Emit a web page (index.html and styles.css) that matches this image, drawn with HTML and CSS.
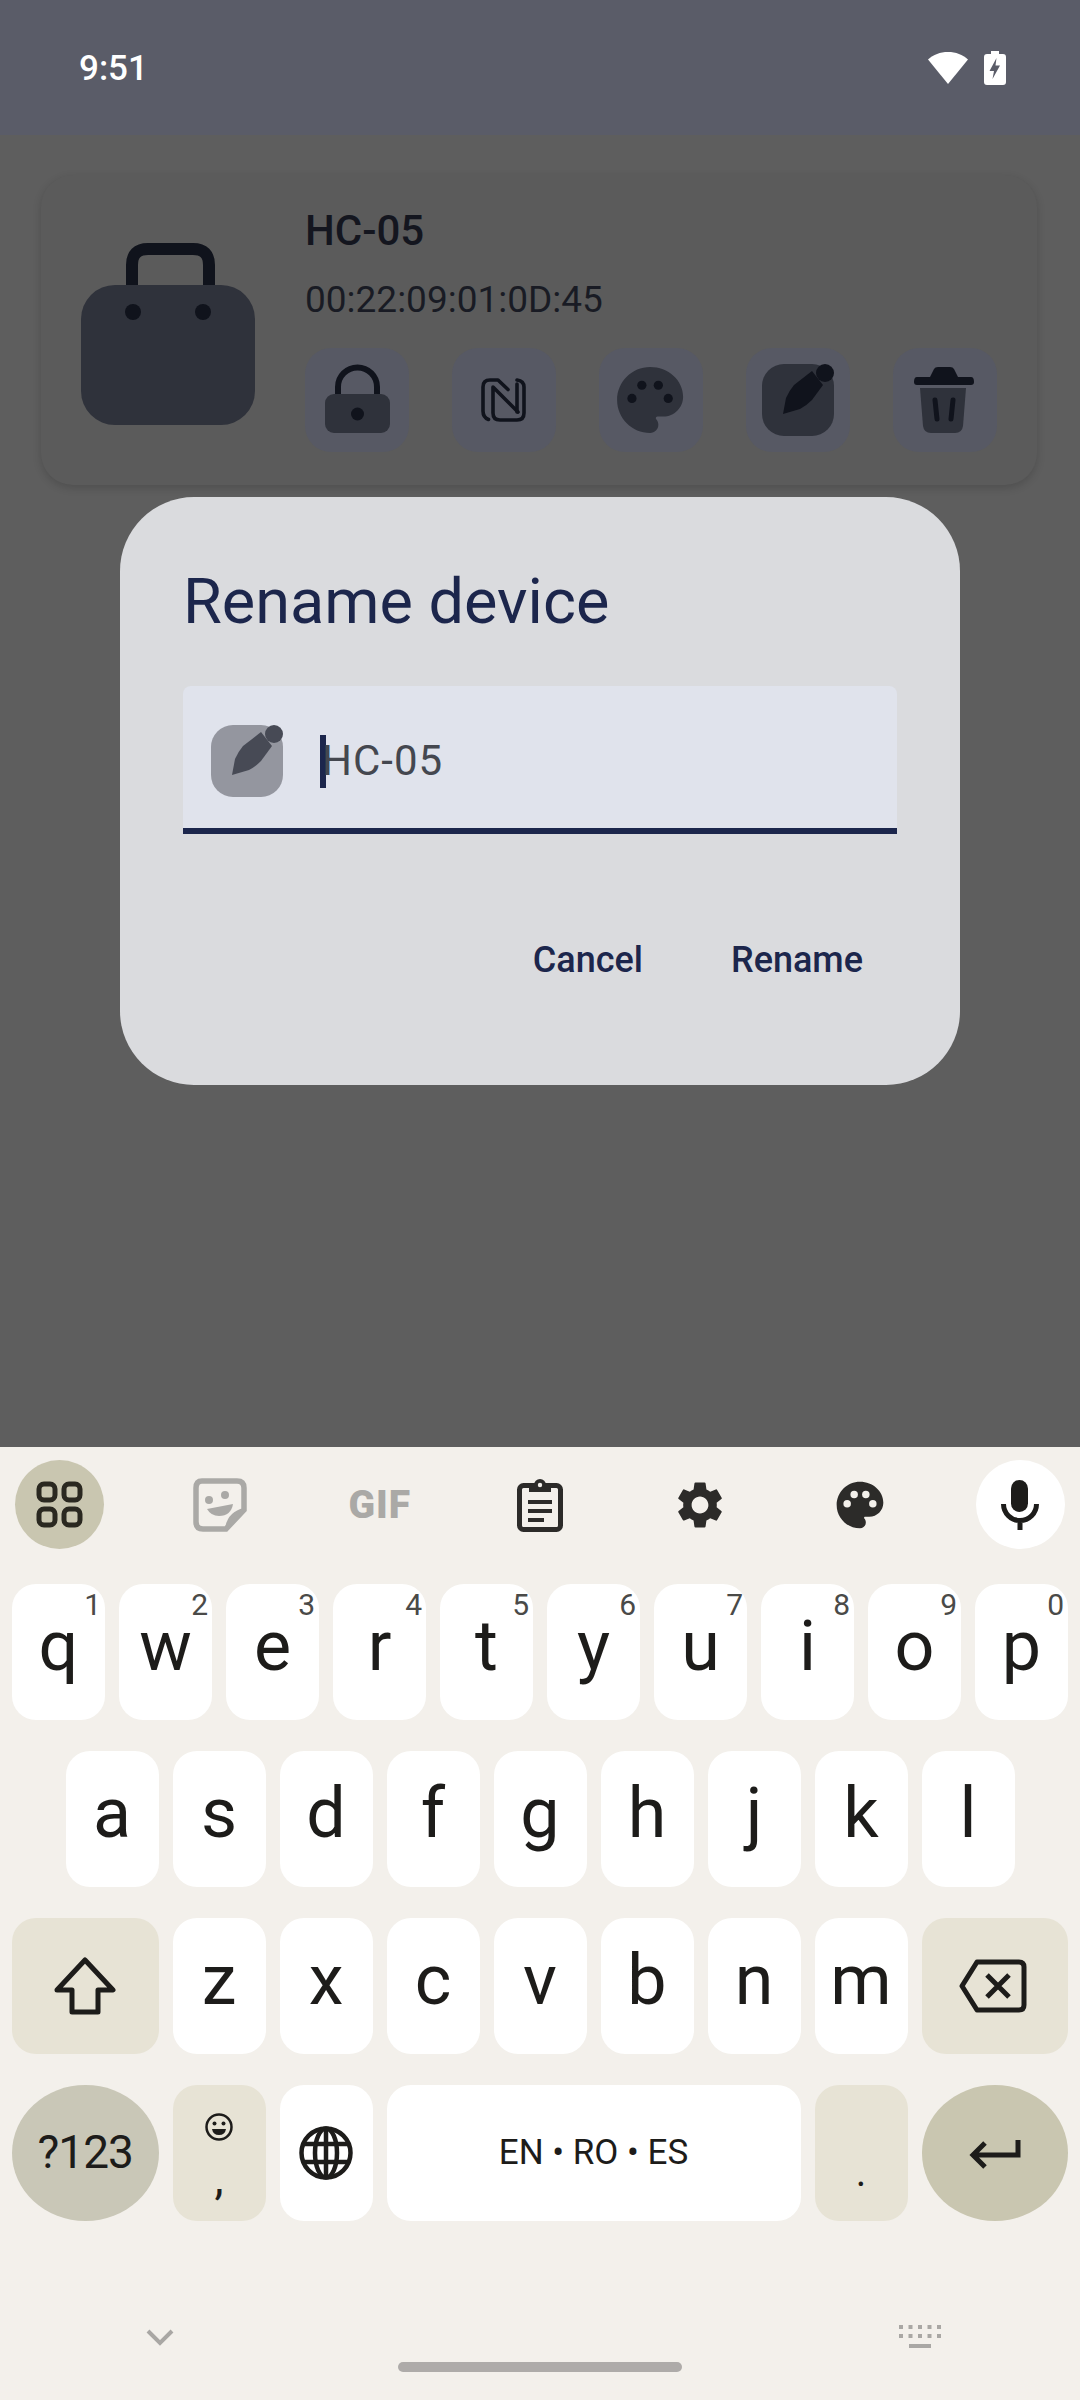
FILE: index.html
```html
<!DOCTYPE html>
<html lang="en">
<head>
<meta charset="UTF-8">
<meta name="viewport" content="width=device-width, initial-scale=1.0">
<title>Rename device</title>
<link rel="stylesheet" href="styles.css">
</head>
<body>
<div class="screen">

    <div class="status-bar">
        <span class="time">9:51</span>
        <div class="status-icons">
            <svg class="wifi" width="40" height="32" viewBox="0 0 40 32"><path fill="#fff" d="M20 0C12 0 5.500 2.500 0 7.500L20 32 40 7.500C34.500 2.500 28 0 20 0z"/></svg>
            <svg class="battery" width="22" height="34" viewBox="0 0 22 34"><path fill="#fff" d="M7 0h8v3h4a3 3 0 0 1 3 3v25a3 3 0 0 1-3 3H3a3 3 0 0 1-3-3V6a3 3 0 0 1 3-3h4z"/><path fill="#5a5c68" d="M12.500 7 5.500 20h4.500l-1.500 8 7.500-13.500h-4.500z"/></svg>
        </div>
    </div>

    <div class="app">
        <div class="card">
            <svg class="device-icon" width="174" height="182" viewBox="0 0 174 182">
                <path fill="none" stroke="#10131c" stroke-width="12" d="M51 46V22Q51 6 67 6H112Q128 6 128 22V46"/>
                <rect x="0" y="42" width="174" height="140" rx="34" fill="#2f323b"/>
                <circle cx="52" cy="69" r="8" fill="#10131c"/>
                <circle cx="122" cy="69" r="8" fill="#10131c"/>
            </svg>
            <div class="device-info">
                <div class="device-name">HC-05</div>
                <div class="device-mac">00:22:09:01:0D:45</div>
                <div class="actions">
                    <div class="tile">
                        <svg width="104" height="104" viewBox="0 0 104 104">
                            <path fill="none" stroke="#10131c" stroke-width="6" d="M33 48V39A19.500 19.500 0 0 1 72 39V48"/>
                            <rect x="20" y="46" width="65" height="39" rx="9" fill="#2f323b"/>
                            <circle cx="52.500" cy="66" r="6.500" fill="#10131c"/>
                        </svg>
                    </div>
                    <div class="tile">
                        <svg width="104" height="104" viewBox="0 0 104 104">
                            <g fill="none" stroke="#10131c" stroke-width="3.600" stroke-linecap="round" stroke-linejoin="round">
                                <path d="M36.500 71.500Q31 69.500 31 63V39Q31 32 38 32H46L56 41.500"/>
                                <path d="M65 32Q72 33 72 39V65Q72 72 65 72H48Q41 72 41 65V39L66 64"/>
                                <path d="M65 36V64"/>
                            </g>
                        </svg>
                    </div>
                    <div class="tile">
                        <svg width="104" height="104" viewBox="0 0 104 104">
                            <g transform="translate(11.500 12.500) scale(3.300)">
                                <path fill="#2f323b" d="M12 2C6.490 2 2 6.490 2 12s4.490 10 10 10c1.380 0 2.500-1.120 2.500-2.500 0-.610-.230-1.200-.640-1.670-.080-.100-.130-.210-.130-.330 0-.280.220-.500.500-.500H16c3.310 0 6-2.690 6-6 0-4.960-4.490-9-10-9z"/>
                                <circle cx="6.500" cy="11.500" r="1.400" fill="#10131c"/>
                                <circle cx="9.500" cy="7.500" r="1.400" fill="#10131c"/>
                                <circle cx="14.500" cy="7.500" r="1.400" fill="#10131c"/>
                                <circle cx="17.500" cy="11.500" r="1.400" fill="#10131c"/>
                            </g>
                        </svg>
                    </div>
                    <div class="tile">
                        <svg width="104" height="104" viewBox="0 0 104 104">
                            <rect x="16" y="16" width="72" height="72" rx="22" fill="#2f323b"/>
                            <path fill="#10131c" d="M37 66L40 50Q43 43 48 37L66 23 77 37 66 52Q60 58 54 61z"/>
                            <circle cx="79" cy="25" r="9" fill="#10131c"/>
                        </svg>
                    </div>
                    <div class="tile">
                        <svg width="104" height="104" viewBox="0 0 104 104">
                            <path fill="#10131c" d="M37 29L41 21Q42 19 45 19H57Q60 19 61 21L65 29H78Q81 29 81 34 81 37 78 37H24Q21 37 21 34 21 29 24 29z"/>
                            <path fill="#2f323b" d="M27 40H73L70 78Q69 85 62 85H38Q31 85 30 78z"/>
                            <path fill="none" stroke="#10131c" stroke-width="5" stroke-linecap="round" d="M42 52L44 71M60 52L58 71"/>
                        </svg>
                    </div>
                </div>
            </div>
        </div>

        <div class="dialog">
            <h1 class="dialog-title">Rename device</h1>
            <div class="field">
                <svg width="74" height="74" viewBox="15 15 74 74">
                    <rect x="16" y="16" width="72" height="72" rx="22" fill="#94969f"/>
                    <path fill="#474a55" d="M37 66L40 50Q43 43 48 37L66 23 77 37 66 52Q60 58 54 61z"/>
                    <circle cx="79" cy="25" r="9" fill="#474a55"/>
                </svg>
                <span class="caret"></span>
                <span class="field-text">HC-05</span>
            </div>
            <div class="dialog-buttons">
                <span class="dialog-btn">Cancel</span>
                <span class="dialog-btn">Rename</span>
            </div>
        </div>
    </div>

    <div class="keyboard">
        <div class="toolbar">
            <div class="tool tool-active">
                <svg width="48" height="48" viewBox="0 0 48 48" fill="none" stroke="#2a2820" stroke-width="5">
                    <rect x="3" y="3" width="16" height="16" rx="5"/><rect x="28" y="3" width="16" height="16" rx="5"/>
                    <rect x="3" y="28" width="16" height="16" rx="5"/><rect x="28" y="28" width="16" height="16" rx="5"/>
                </svg>
            </div>
            <div class="tool">
                <svg width="54" height="54" viewBox="0 0 54 54">
                    <path fill="none" stroke="#aaa9a6" stroke-width="5.500" d="M9 3H44Q51 3 51 10V32L33 51H10Q3 51 3 44V10Q3 3 9 3z"/>
                    <path fill="#aaa9a6" d="M51 30V33L34 51H32Q34 34 51 30z"/>
                    <circle cx="16" cy="22" r="4" fill="#aaa9a6"/><circle cx="32" cy="17" r="4" fill="#aaa9a6"/>
                    <path fill="#aaa9a6" d="M14 31L40 26Q38 38 26 38 18 38 14 31z"/>
                </svg>
            </div>
            <div class="tool"><span class="gif">GIF</span></div>
            <div class="tool">
                <svg width="46" height="54" viewBox="0 0 46 54">
                    <rect x="2.500" y="7.500" width="41" height="44" rx="4" fill="none" stroke="#2c2b29" stroke-width="5"/>
                    <path fill="#2c2b29" d="M12 7H17A6 6 0 0 1 29 7H34V14H12z"/>
                    <circle cx="23" cy="7" r="2.200" fill="#f3f0eb"/>
                    <path fill="#2c2b29" d="M11 22H35V26H11zM11 31H35V35H11zM11 40H27V44H11z"/>
                </svg>
            </div>
            <div class="tool">
                <svg width="56" height="56" viewBox="0 0 24 24"><path fill="#2c2b29" d="M19.140 12.940c.040-.300.060-.610.060-.940 0-.320-.020-.640-.070-.940l2.030-1.580a.490.490 0 0 0 .120-.610l-1.920-3.320a.488.488 0 0 0-.590-.220l-2.390.960c-.500-.380-1.030-.700-1.620-.940l-.360-2.540a.484.484 0 0 0-.480-.410h-3.840c-.240 0-.430.170-.470.410l-.360 2.540c-.590.240-1.130.570-1.620.940l-2.390-.960c-.220-.080-.470 0-.590.220L2.740 8.870c-.120.210-.080.470.120.610l2.030 1.580c-.050.300-.090.630-.090.940s.020.640.07.940l-2.030 1.580a.490.490 0 0 0-.120.610l1.920 3.320c.120.220.370.290.590.220l2.390-.960c.500.380 1.030.700 1.620.940l.360 2.540c.050.240.240.410.480.410h3.840c.240 0 .440-.170.470-.410l.360-2.540c.590-.240 1.130-.560 1.620-.940l2.390.960c.220.080.470 0 .590-.220l1.920-3.320c.120-.220.070-.470-.120-.610l-2.010-1.580zM12 15.600c-1.980 0-3.600-1.620-3.600-3.600s1.620-3.600 3.600-3.600 3.600 1.620 3.600 3.600-1.620 3.600-3.600 3.600z"/></svg>
            </div>
            <div class="tool">
                <svg width="56" height="56" viewBox="0 0 24 24">
                    <path fill="#2c2b29" d="M12 2C6.490 2 2 6.490 2 12s4.490 10 10 10c1.380 0 2.500-1.120 2.500-2.500 0-.610-.230-1.200-.640-1.670-.080-.100-.130-.210-.130-.330 0-.280.220-.500.500-.500H16c3.310 0 6-2.690 6-6 0-4.960-4.490-9-10-9z"/>
                    <circle cx="6.500" cy="11.500" r="1.600" fill="#f3f0eb"/><circle cx="9.500" cy="7.500" r="1.600" fill="#f3f0eb"/>
                    <circle cx="14.500" cy="7.500" r="1.600" fill="#f3f0eb"/><circle cx="17.500" cy="11.500" r="1.600" fill="#f3f0eb"/>
                </svg>
            </div>
            <div class="tool tool-mic">
                <svg width="38" height="50" viewBox="0 0 38 50">
                    <rect x="10" y="0" width="17" height="32" rx="8.500" fill="#1d1c1a"/>
                    <path fill="none" stroke="#1d1c1a" stroke-width="5" d="M2.500 24A16 16 0 0 0 35.500 24M19 40V50"/>
                </svg>
            </div>
        </div>

        <div class="row">
            <div class="key">q<sup class="hint">1</sup></div>
            <div class="key">w<sup class="hint">2</sup></div>
            <div class="key">e<sup class="hint">3</sup></div>
            <div class="key">r<sup class="hint">4</sup></div>
            <div class="key">t<sup class="hint">5</sup></div>
            <div class="key">y<sup class="hint">6</sup></div>
            <div class="key">u<sup class="hint">7</sup></div>
            <div class="key">i<sup class="hint">8</sup></div>
            <div class="key">o<sup class="hint">9</sup></div>
            <div class="key">p<sup class="hint">0</sup></div>
        </div>
        <div class="row">
            <div class="key">a</div>
            <div class="key">s</div>
            <div class="key">d</div>
            <div class="key">f</div>
            <div class="key">g</div>
            <div class="key">h</div>
            <div class="key">j</div>
            <div class="key">k</div>
            <div class="key">l</div>
        </div>
        <div class="row">
            <div class="key key-wide key-fn">
                <svg width="62" height="58" viewBox="0 0 62 58"><path fill="none" stroke="#1d1c1a" stroke-width="5" stroke-linejoin="round" d="M31 3L59 33H44V55H18V33H3z"/></svg>
            </div>
            <div class="key">z</div>
            <div class="key">x</div>
            <div class="key">c</div>
            <div class="key">v</div>
            <div class="key">b</div>
            <div class="key">n</div>
            <div class="key">m</div>
            <div class="key key-wide key-fn key-delete">
                <svg width="68" height="54" viewBox="0 0 68 54">
                    <path fill="none" stroke="#1d1c1a" stroke-width="5" stroke-linejoin="round" d="M18 3H60Q65 3 65 8V46Q65 51 60 51H18L3 27z"/>
                    <path fill="none" stroke="#1d1c1a" stroke-width="5" d="M28 16L50 38M50 16L28 38"/>
                </svg>
            </div>
        </div>
        <div class="row">
            <div class="key key-wide key-round key-sym">?123</div>
            <div class="key key-fn key-stack">
                <svg width="30" height="30" viewBox="0 0 30 30">
                    <circle cx="15" cy="15" r="12.500" fill="none" stroke="#1d1c1a" stroke-width="2.500"/>
                    <circle cx="10.500" cy="11.500" r="2" fill="#1d1c1a"/><circle cx="19.500" cy="11.500" r="2" fill="#1d1c1a"/>
                    <path fill="#1d1c1a" d="M8 17H22Q21 23 15 23 9 23 8 17z"/>
                </svg>
                <span class="comma">,</span>
            </div>
            <div class="key">
                <svg width="54" height="54" viewBox="0 0 54 54" fill="none" stroke="#1d1c1a" stroke-width="4.500">
                    <circle cx="27" cy="27" r="24.500"/><ellipse cx="27" cy="27" rx="11" ry="24.500"/>
                    <path d="M27 3V51M5 18H49M5 36H49"/>
                </svg>
            </div>
            <div class="key key-space">EN • RO • ES</div>
            <div class="key key-fn key-period">.</div>
            <div class="key key-wide key-round key-enter">
                <svg width="52" height="30" viewBox="0 0 52 30"><path fill="none" stroke="#1d1c1a" stroke-width="5" d="M49 0V15H5M16 3L4 15 16 27"/></svg>
            </div>
        </div>

        <div class="nav">
            <svg width="28" height="17" viewBox="0 0 28 17"><path fill="none" stroke="#a9a7a4" stroke-width="4" d="M2 2L14 14 26 2"/></svg>
            <svg width="42" height="24" viewBox="0 0 42 24" fill="#a9a7a4">
                <path d="M0 0h4v4H0zM9.500 0h4v4h-4zM19 0h4v4h-4zM28.500 0h4v4h-4zM38 0h4v4h-4z"/>
                <path d="M0 9h4v4H0zM9.500 9h4v4h-4zM19 9h4v4h-4zM28.500 9h4v4h-4zM38 9h4v4h-4z"/>
                <path d="M10 19h22v4H10z"/>
            </svg>
        </div>
        <div class="home-pill"></div>
    </div>
</div>
</body>
</html>
```

FILE: styles.css
```css
* {
    box-sizing: border-box;
}

body {
    margin: 0;
    font-family: 'Roboto', sans-serif;
}

.screen {
    width: 1080px;
    height: 2400px;
    display: flex;
    flex-direction: column;
    overflow: hidden;
}

.status-bar {
    height: 135px;
    flex: none;
    background-color: #5a5c68;
    display: flex;
    justify-content: space-between;
    align-items: center;
    padding: 0 74px 0 79px;
    color: #fff;
}

.time {
    font-size: 35px;
    font-weight: 500;
    margin-top: 2px;
}

.status-icons {
    display: flex;
    align-items: center;
    gap: 16px;
}

.app {
    flex: 1;
    position: relative;
    background-color: #5e5e5e;
    padding: 40px 43px 0 41px;
}

.card {
    height: 310px;
    background-color: #5b5b5b;
    border-radius: 32px;
    box-shadow: 0 3px 8px rgba(0, 0, 0, 0.16);
    display: flex;
    padding: 0 40px;
}

.device-icon {
    margin-top: 68px;
    flex: none;
}

.device-info {
    margin-left: 50px;
    padding-top: 31px;
}

.device-name {
    font-size: 42px;
    font-weight: 500;
    line-height: 50px;
    color: #14161f;
}

.device-mac {
    font-size: 37px;
    line-height: 50px;
    margin-top: 19px;
    color: #191b24;
}

.actions {
    display: flex;
    gap: 43px;
    margin-top: 23px;
}

.tile {
    width: 104px;
    height: 104px;
    background-color: #575964;
    border-radius: 26px;
}

.dialog {
    position: absolute;
    left: 120px;
    top: 362px;
    width: 840px;
    height: 588px;
    background-color: #dadbde;
    border-radius: 74px;
    padding: 68px 63px 0;
}

.dialog-title {
    margin: 0;
    font-size: 63px;
    font-weight: 400;
    line-height: 74px;
    color: #1c264c;
}

.field {
    height: 148px;
    margin-top: 47px;
    background-color: #e0e3ec;
    border-radius: 8px 8px 0 0;
    border-bottom: 6px solid #1c264c;
    display: flex;
    align-items: center;
    padding: 8px 27px 0;
}

.caret {
    width: 6px;
    height: 53px;
    background-color: #1c264c;
    margin-left: 36px;
}

.field-text {
    font-size: 42px;
    letter-spacing: 1px;
    margin-left: -4px;
    margin-bottom: 2px;
    color: #44474f;
}

.dialog-buttons {
    display: flex;
    justify-content: flex-end;
    gap: 88px;
    margin-top: 104px;
    padding-right: 34px;
}

.dialog-btn {
    font-size: 36px;
    font-weight: 500;
    line-height: 44px;
    color: #1c264c;
}

.keyboard {
    height: 953px;
    flex: none;
    background-color: #f3f0eb;
    padding-top: 13px;
}

.toolbar {
    display: flex;
    justify-content: space-between;
    padding: 0 15px;
    margin-bottom: 35px;
}

.tool {
    width: 89px;
    height: 89px;
    border-radius: 50%;
    display: flex;
    align-items: center;
    justify-content: center;
}

.tool-active {
    background-color: #c9c6b0;
}

.tool-mic {
    background-color: #fff;
}

.gif {
    font-size: 39px;
    font-weight: 900;
    letter-spacing: 1px;
    color: #aaa9a6;
}

.row {
    display: flex;
    justify-content: center;
    gap: 14px;
    margin-bottom: 31px;
}

.key {
    width: 93px;
    height: 136px;
    position: relative;
    background-color: #fff;
    border-radius: 24px;
    display: flex;
    align-items: center;
    justify-content: center;
    font-size: 70px;
    color: #1d1c1a;
    padding-bottom: 12px;
}

.key svg {
    margin-top: 12px;
}

.hint {
    position: absolute;
    top: 4px;
    right: 4px;
    font-size: 30px;
    line-height: 34px;
    color: #4a4a48;
}

.key-wide {
    width: 146.5px;
}

.key-fn {
    background-color: #e7e3d5;
}

.key-delete svg {
    margin-right: 3px;
}

.key-round {
    border-radius: 50%;
}

.key-sym {
    background-color: #c9c7b7;
    font-size: 46px;
    letter-spacing: -1px;
    padding-bottom: 3px;
}

.key-enter {
    background-color: #c9c6b0;
}

.key-enter svg {
    margin-top: 16px;
}

.key-space {
    width: 414px;
    font-size: 35px;
    padding-bottom: 2px;
}

.key-stack {
    flex-direction: column;
    padding-bottom: 0;
    justify-content: flex-start;
}

.key-stack svg {
    margin-top: 27px;
}

.comma {
    font-size: 46px;
    line-height: 40px;
    margin-top: 16px;
}

.key-period {
    font-size: 40px;
    padding: 38px 0 0;
}

.nav {
    display: flex;
    justify-content: space-between;
    align-items: center;
    margin-top: 104px;
    padding: 0 139px 0 146px;
    height: 24px;
}

.home-pill {
    width: 284px;
    height: 10px;
    margin: 13px auto 0;
    background-color: #aeaba9;
    border-radius: 5px;
}
```
